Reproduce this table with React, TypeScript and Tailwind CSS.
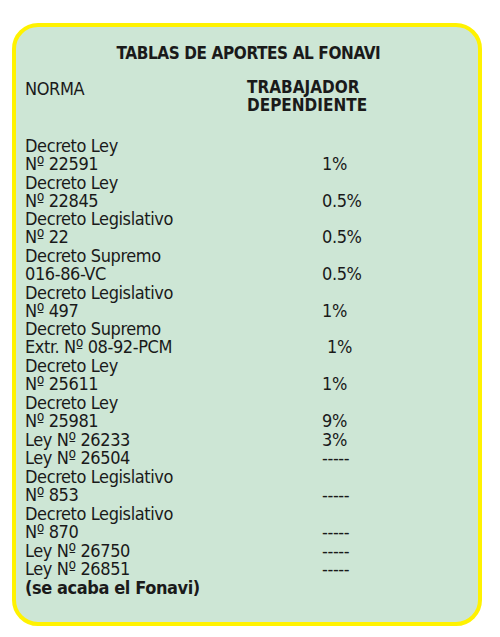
import React from 'react';

type Row = { norma: string[]; aporte?: string; extra?: boolean };

const rows: Row[] = [
  { norma: ['Decreto Ley', 'Nº 22591'], aporte: '1%' },
  { norma: ['Decreto Ley', 'Nº 22845'], aporte: '0.5%' },
  { norma: ['Decreto Legislativo', 'Nº 22'], aporte: '0.5%' },
  { norma: ['Decreto Supremo', '016-86-VC'], aporte: '0.5%' },
  { norma: ['Decreto Legislativo', 'Nº 497'], aporte: '1%' },
  { norma: ['Decreto Supremo', 'Extr. Nº 08-92-PCM'], aporte: '1%', extra: true },
  { norma: ['Decreto Ley', 'Nº 25611'], aporte: '1%' },
  { norma: ['Decreto Ley', 'Nº 25981'], aporte: '9%' },
  { norma: ['Ley Nº 26233'], aporte: '3%' },
  { norma: ['Ley Nº 26504'], aporte: '-----' },
  { norma: ['Decreto Legislativo', 'Nº 853'], aporte: '-----' },
  { norma: ['Decreto Legislativo', 'Nº 870'], aporte: '-----' },
  { norma: ['Ley Nº 26750'], aporte: '-----' },
  { norma: ['Ley Nº 26851'], aporte: '-----' },
];

const App: React.FC = () => {
  return (
    <div className="w-[500px] h-[637px] bg-white pt-[23px] pl-[12px] font-['Liberation_Sans_Narrow','DejaVu_Sans_Condensed',Roboto,sans-serif] text-[#1a1a1a]">
      <div className="w-[470px] h-[603px] rounded-[26px] border-[4px] border-[#fff200] bg-[#cde6d5] pl-[9px] pt-[16px]">
        <h1 className="text-center text-[17px] font-bold leading-[20px] tracking-[-0.4px] pr-[6px]">
          TABLAS DE APORTES AL FONAVI
        </h1>

        <div className="mt-[15px] flex text-[18px] leading-[18px] tracking-[-0.4px]">
          <span className="w-[222px] pt-[2px]">NORMA</span>
          <span className="font-bold text-[17px] leading-[18px] tracking-normal">
            TRABAJADOR
            <br />
            DEPENDIENTE
          </span>
        </div>

        <div className="mt-[23px] flex flex-col gap-[1px] text-[18px] leading-[17.85px] tracking-[-0.4px]">
          {rows.map((r) => (
            <div key={r.norma.join(' ')} className="grid grid-cols-[297px_1fr]">
              <div>
                {r.norma.map((l) => (
                  <div key={l}>{l}</div>
                ))}
              </div>
              <div className={`self-end ${r.extra ? 'pl-[5px]' : ''}`}>{r.aporte}</div>
            </div>
          ))}
          <div className="font-bold">(se acaba el Fonavi)</div>
        </div>
      </div>
    </div>
  );
};

export default App;
